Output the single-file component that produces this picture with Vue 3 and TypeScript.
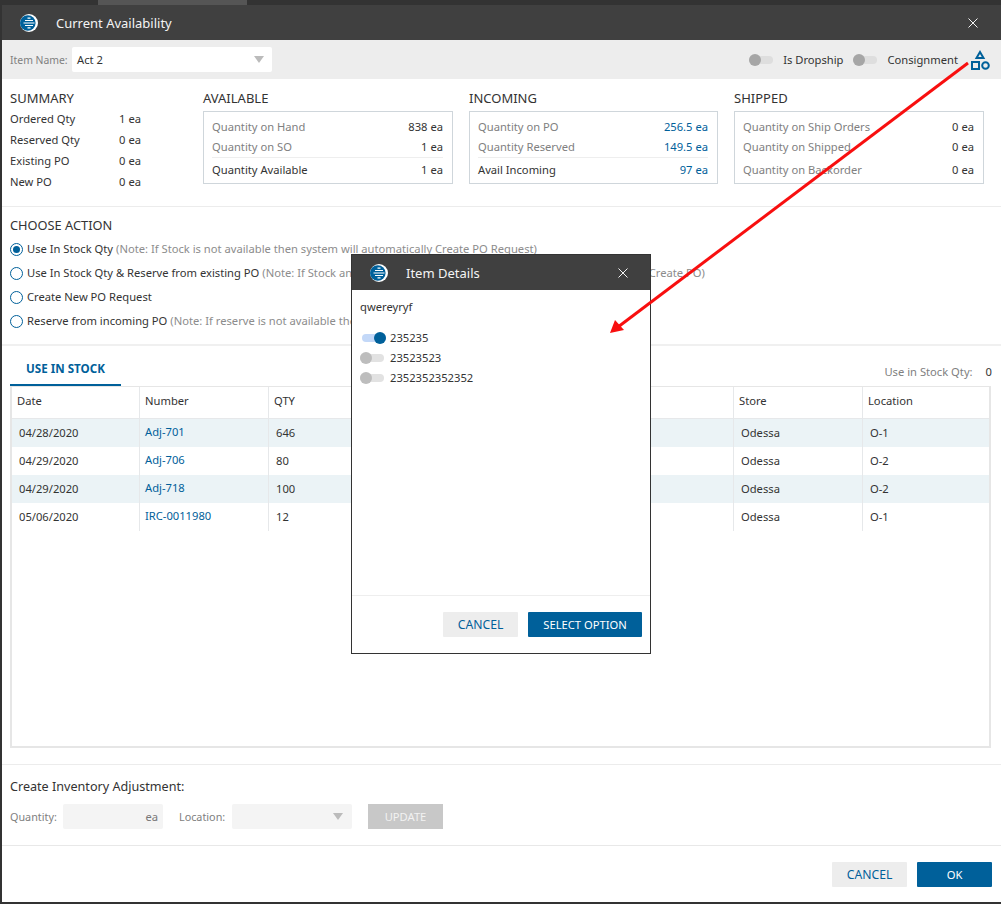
<script setup lang="ts">
interface Stock { date: string; num: string; qty: string; loc: string }
const rows: Stock[] = [
  { date: '04/28/2020', num: 'Adj-701', qty: '646', loc: 'O-1' },
  { date: '04/29/2020', num: 'Adj-706', qty: '80', loc: 'O-2' },
  { date: '04/29/2020', num: 'Adj-718', qty: '100', loc: 'O-2' },
  { date: '05/06/2020', num: 'IRC-0011980', qty: '12', loc: 'O-1' },
]
const summary = [['Ordered Qty', '1 ea'], ['Reserved Qty', '0 ea'], ['Existing PO', '0 ea'], ['New PO', '0 ea']]
const actions = [
  ['Use In Stock Qty', '(Note: If Stock is not available then system will automatically Create PO Request)'],
  ['Use In Stock Qty & Reserve from existing PO', '(Note: If Stock and Reserve is not available then system will automatically Create PO)'],
  ['Create New PO Request', ''],
  ['Reserve from incoming PO', '(Note: If reserve is not available then system will automatically Create PO Request)'],
]
</script>

<template>
  <div class="page">
    <div class="strip"><span class="strip-light"></span></div>
    <div class="win">
      <div class="titlebar">
        <svg class="logo" viewBox="0 0 18 18"><circle cx="9" cy="9" r="9" fill="#fff"/><circle cx="7.800" cy="9" r="7.800" fill="#00609a"/><path d="M3.500 9h11M5 6.500h8M5 11.500h8M7.500 4.200h3M7.500 13.800h3" stroke="#fff" stroke-width="1.200"/></svg>
        <span class="title">Current Availability</span>
        <svg class="close" viewBox="0 0 10 10"><path d="M0.500 0.500l9 9M9.500 0.500l-9 9" stroke="#f4f4f4" stroke-width="1"/></svg>
      </div>
      <div class="toolbar">
        <span class="muted item-label">Item Name:</span>
        <div class="select"><span>Act 2</span><i class="caret"></i></div>
        <div class="spacer"></div>
        <span class="sw"><i></i></span><span class="swlabel">Is Dropship</span>
        <span class="sw sw2"><i></i></span><span class="swlabel">Consignment</span>
        <svg class="shapes" viewBox="0 0 20 20"><path d="M10 2L13.500 8H6.500z" fill="none" stroke="#00609a" stroke-width="2"/><rect x="2" y="12" width="7" height="7" fill="none" stroke="#00609a" stroke-width="2"/><circle cx="15.500" cy="15.500" r="3.300" fill="none" stroke="#00609a" stroke-width="2"/></svg>
      </div>
      <div class="stats">
        <div class="summary">
          <div class="h">SUMMARY</div>
          <div v-for="s in summary" :key="s[0]" class="sumrow"><span>{{ s[0] }}</span><span>{{ s[1] }}</span></div>
        </div>
        <div class="col c1">
          <div class="h">AVAILABLE</div>
          <div class="box">
            <div class="br muted"><span>Quantity on Hand</span><b>838 ea</b></div>
            <div class="br muted"><span>Quantity on SO</span><b>1 ea</b></div>
            <div class="br total"><span>Quantity Available</span><b>1 ea</b></div>
          </div>
        </div>
        <div class="col c2">
          <div class="h">INCOMING</div>
          <div class="box">
            <div class="br muted"><span>Quantity on PO</span><b class="link">256.5 ea</b></div>
            <div class="br muted"><span>Quantity Reserved</span><b class="link">149.5 ea</b></div>
            <div class="br total"><span>Avail Incoming</span><b class="link">97 ea</b></div>
          </div>
        </div>
        <div class="col c3">
          <div class="h">SHIPPED</div>
          <div class="box">
            <div class="br muted"><span>Quantity on Ship Orders</span><b>0 ea</b></div>
            <div class="br muted"><span>Quantity on Shipped</span><b>0 ea</b></div>
            <div class="br muted plain"><span>Quantity on Backorder</span><b>0 ea</b></div>
          </div>
        </div>
      </div>
      <div class="actions">
        <div class="h">CHOOSE ACTION</div>
        <div v-for="(a, i) in actions" :key="a[0]" class="radio">
          <span class="dot" :class="{ on: i === 0 }"></span><span>{{ a[0] }}</span><span class="note">{{ a[1] }}</span>
        </div>
      </div>
      <div class="stock">
        <div class="tabs">
          <span class="tab">USE IN STOCK</span>
          <span class="uis"><span>Use in Stock Qty:</span><b>0</b></span>
        </div>
        <div class="tablebox">
          <div class="tr head">
            <div>Date</div><div>Number</div><div>QTY</div><div></div><div>Store</div><div>Location</div>
          </div>
          <div v-for="(r, i) in rows" :key="r.num" class="tr body" :class="{ odd: i % 2 === 0 }">
            <div>{{ r.date }}</div><div class="num">{{ r.num }}</div><div>{{ r.qty }}</div><div></div><div>Odessa</div><div>{{ r.loc }}</div>
          </div>
        </div>
      </div>
      <div class="adjust">
        <div class="adj-title">Create Inventory Adjustment:</div>
        <div class="adj-row">
          <span class="muted lab">Quantity:</span>
          <div class="field qty">ea</div>
          <span class="muted lab loc">Location:</span>
          <div class="field locf"><i class="caret"></i></div>
          <div class="update">UPDATE</div>
        </div>
      </div>
      <div class="footer">
        <div class="btn cancel">CANCEL</div>
        <div class="btn ok">OK</div>
      </div>
    </div>

    <div class="modal">
      <div class="titlebar mt">
        <svg class="logo" viewBox="0 0 18 18"><circle cx="9" cy="9" r="9" fill="#fff"/><circle cx="7.800" cy="9" r="7.800" fill="#00609a"/><path d="M3.500 9h11M5 6.500h8M5 11.500h8M7.500 4.200h3M7.500 13.800h3" stroke="#fff" stroke-width="1.200"/></svg>
        <span class="title">Item Details</span>
        <svg class="close" viewBox="0 0 10 10"><path d="M0.500 0.500l9 9M9.500 0.500l-9 9" stroke="#f4f4f4" stroke-width="1"/></svg>
      </div>
      <div class="mbody">
        <div class="mname">qwereyryf</div>
        <div class="opt"><span class="msw on"><i></i></span>235235</div>
        <div class="opt"><span class="msw"><i></i></span>23523523</div>
        <div class="opt"><span class="msw"><i></i></span>2352352352352</div>
      </div>
      <div class="mfoot">
        <div class="btn cancel">CANCEL</div>
        <div class="btn ok sel">SELECT OPTION</div>
      </div>
    </div>

    <svg class="arrow" width="1001" height="904" viewBox="0 0 1001 904">
      <path d="M968 63L618 327" stroke="#f80f0f" stroke-width="3" fill="none"/>
      <path d="M610 333L615 320L624 330z" fill="#f80f0f"/>
    </svg>
  </div>
</template>

<style>
html, body { margin: 0; background: #fff; }
</style>

<style scoped>
.page {
  position: relative; width: 1001px; height: 904px; overflow: hidden; background: #fff;
  font-family: "Noto Sans", "Open Sans", sans-serif; font-size: 11.2px; color: #333; line-height: 16px;
}
.strip { height: 5px; background: #333; }
.strip-light { display: block; margin-left: 98px; width: 149px; height: 5px; background: #555; }
.win { height: 897px; border-left: 2px solid #333; border-bottom: 2px solid #333; display: flex; flex-direction: column; }
.titlebar { height: 35px; flex: none; background: #404040; display: flex; align-items: center; padding-left: 18px; padding-right: 23px; }
.logo { width: 18px; height: 18px; flex: none; }
.title { color: #f4f4f4; font-size: 13px; margin-left: 18px; }
.close { width: 10px; height: 10px; margin-left: auto; }
.toolbar { height: 39px; flex: none; background: #ededed; display: flex; align-items: center; padding: 0 11px 0 8px; }
.muted { color: #808080; }
.item-label { width: 57px; font-size: 10.4px; white-space: nowrap; }
.select { width: 200px; height: 25px; margin-left: 5px; background: #fff; border-radius: 2px; display: flex; align-items: center; padding: 0 8px 0 5px; box-sizing: border-box; justify-content: space-between; }
.caret { width: 0; height: 0; border-left: 5px solid transparent; border-right: 5px solid transparent; border-top: 7px solid #bbb; }
.spacer { flex: 1; }
.sw { width: 24px; height: 8px; border-radius: 4px; background: #dedede; position: relative; }
.sw i { position: absolute; left: 0; top: -2px; width: 12px; height: 12px; border-radius: 50%; background: #a6a6a6; }
.sw2 { margin-left: 10px; }
.swlabel { margin-left: 10px; }
.shapes { width: 20px; height: 20px; margin-left: 12px; }
.stats { height: 128px; flex: none; border-bottom: 1px solid #ececec; display: flex; box-sizing: border-box; padding: 10px 0 0 8px; }
.h { font-size: 13px; color: #333; line-height: 18px; }
.summary { width: 193px; }
.summary .h { margin-bottom: 1px; }
.sumrow { display: flex; height: 21px; align-items: center; width: 131px; justify-content: space-between; }
.col { width: 250px; margin-right: 16px; }
.c2 { width: 249px; }
.box { margin-top: 4px; height: 73px; box-sizing: border-box; border: 1px solid #cfd6db; padding: 5px 9px 0 8px; }
.br { display: flex; justify-content: space-between; height: 20px; align-items: center; }
.br b { font-weight: 400; color: #333; }
.br b.link { color: #00609a; }
.total { border-top: 1px solid #eee; height: 24px; color: #333; }
.plain { margin-top: 1px; height: 24px; }
.actions { height: 139px; flex: none; box-sizing: border-box; border-bottom: 2px solid #f0f0f0; padding: 9px 0 0 8px; }
.actions .h { margin-bottom: 3px; font-size: 12.800px; }
.radio { display: flex; align-items: center; height: 24px; white-space: nowrap; }
.dot { width: 13px; height: 13px; box-sizing: border-box; border: 1px solid #00609a; border-radius: 50%; margin-right: 4px; position: relative; background: #fff; }
.dot.on::after { content: ""; position: absolute; inset: 2px; background: #00609a; border-radius: 50%; }
.note { color: #8c8c8c; margin-left: 3px; white-space: nowrap; }
.stock { height: 419px; flex: none; box-sizing: border-box; border-bottom: 1px solid #ececec; padding: 8px 9px 0 8px; }
.tabs { display: flex; justify-content: space-between; height: 32px; }
.tab { width: 111px; box-sizing: border-box; text-align: center; border-bottom: 2px solid #00609a; color: #00609a; font-weight: 700; line-height: 30px; font-size: 11.600px; }
.uis { color: #808080; display: flex; gap: 13px; padding: 8px 0 0; line-height: 20px; }
.uis b { font-weight: 400; color: #333; }
.tablebox { height: 362px; box-sizing: border-box; border: 2px solid #e6e6e6; border-top-width: 1px; margin-right: 1px; }
.tr { display: grid; grid-template-columns: 127px 129px 129px 336px 129px 127px; }
.tr > div { border-left: 1px solid #e6e8ea; box-sizing: border-box; padding-left: 7px; display: flex; align-items: center; }
.tr > div:first-child { border-left: 0; }
.head { height: 31px; border-bottom: 1px solid #e6e8ea; }
.head > div, .head > div:first-child { padding-left: 5px; padding-bottom: 4px; }
.body { height: 28px; }
.body > .num { color: #00609a; padding-left: 5px; padding-bottom: 2px; }
.odd { background: #ebf3f6; }
.adjust { height: 81px; flex: none; box-sizing: border-box; border-bottom: 1px solid #e8e8e8; padding: 13px 8px 0; }
.adj-title { line-height: 18px; color: #333; font-size: 12.600px; }
.adj-row { display: flex; align-items: center; margin-top: 8px; }
.lab { width: 47px; white-space: nowrap; font-size: 10.800px; }
.field { height: 25px; background: #f4f4f4; border-radius: 2px; box-sizing: border-box; }
.qty { width: 100px; margin-left: 6px; color: #777; line-height: 25px; text-align: right; padding-right: 5px; }
.loc { margin-left: 16px; }
.locf { width: 120px; margin-left: 6px; display: flex; align-items: center; justify-content: flex-end; padding-right: 9px; }
.update { width: 75px; height: 25px; margin-left: 16px; background: #c8c8c8; color: #f2f2f2; text-align: center; line-height: 25px; }
.footer { flex: 1; display: flex; justify-content: flex-end; gap: 10px; padding: 16px 9px 0 0; }
.btn { height: 25px; line-height: 25px; text-align: center; border-radius: 1px; }
.cancel { width: 75px; background: #ededed; color: #00609a; font-size: 12.200px; }
.ok { width: 75px; background: #00609a; color: #fff; }
.arrow { position: absolute; left: 0; top: 0; pointer-events: none; }
.modal { position: absolute; left: 351px; top: 254px; width: 300px; height: 400px; box-sizing: border-box; border: 1px solid #333; background: #fff; display: flex; flex-direction: column; }
.mt { padding-right: 22px; }
.mbody { flex: 1; border-bottom: 1px solid #eee; padding: 9px 8px 0; }
.mname { height: 29px; line-height: 16px; }
.opt { display: flex; align-items: center; height: 20px; }
.msw { width: 24px; height: 8px; border-radius: 4px; background: #e2e2e2; position: relative; margin-right: 6px; }
.msw i { position: absolute; left: 0; top: -2px; width: 12px; height: 12px; border-radius: 50%; background: #bdbdbd; }
.msw.on { background: #c3d8f8; margin-left: 2px; margin-right: 4px; }
.msw.on i { left: 12px; background: #00609a; }
.mfoot { height: 57px; flex: none; display: flex; justify-content: flex-end; gap: 10px; padding: 16px 8px 0 0; box-sizing: border-box; }
.sel { width: 114px; }
</style>
